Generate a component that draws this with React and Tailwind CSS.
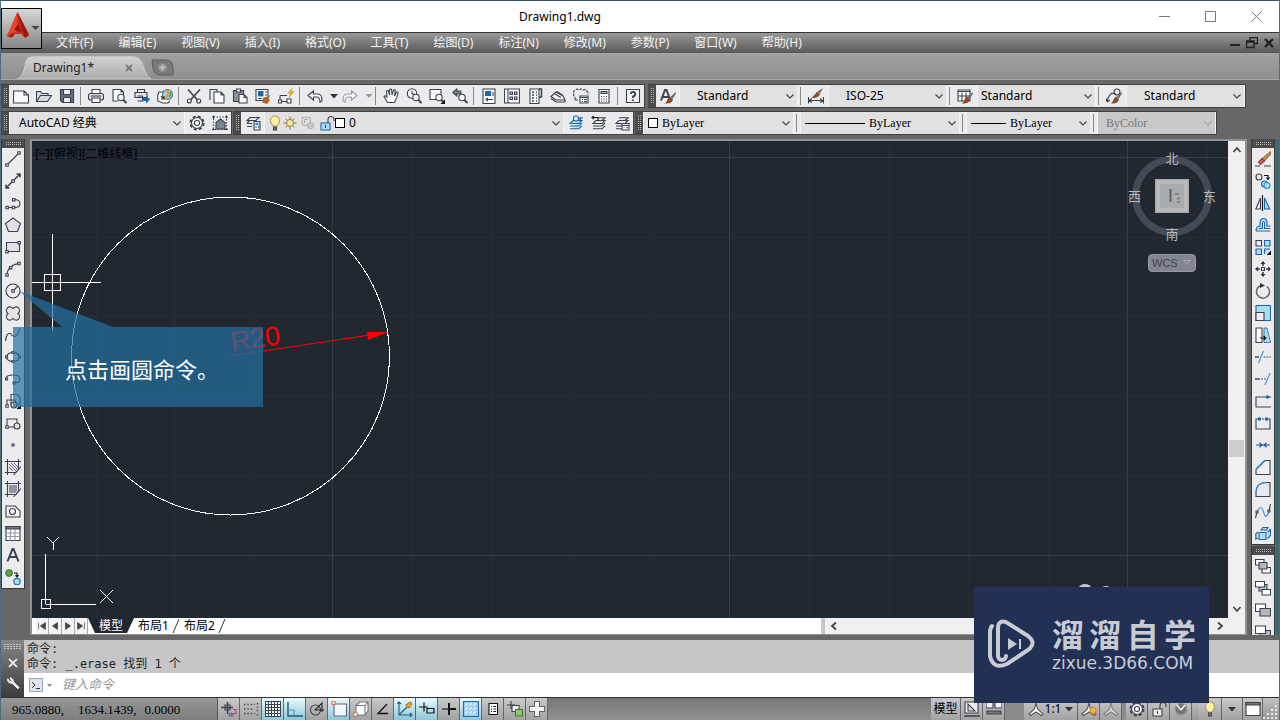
import { useState } from "react";
import clsx from "clsx";

const menus = [
  "文件(F)", "编辑(E)", "视图(V)", "插入(I)", "格式(O)", "工具(T)",
  "绘图(D)", "标注(N)", "修改(M)", "参数(P)", "窗口(W)", "帮助(H)",
];

const standardGroups = [
  ["new", "open", "save"],
  ["print", "preview", "publish", "globe"],
  ["cut", "copy", "paste", "match", "blockEdit"],
  ["undo", "drop", "redo", "dropOff"],
  ["pan", "zoomTime", "zoomWindow", "zoomPrev"],
  ["properties", "design", "palette", "sheet", "markup", "calc"],
  ["help"],
];

const drawTools = [
  "line", "xline", "pline", "polygon", "rect", "arc", "circle", "cloud", "spline", "ellipse",
  "ellipseArc", "insertBlock", "makeBlock", "point", "hatch", "gradient", "region", "table", "mtext", "addSelected",
];

const modifyTools = [
  "erase", "copyObject", "mirror", "offset", "array", "move", "rotate", "scale", "stretch",
  "trim", "extend", "breakPoint", "break", "join", "chamfer", "fillet", "blend", "explode",
];

const orderTools = ["front", "back", "above", "under"];

const statusToggles = [
  { icon: "infer" },
  { icon: "snap" },
  { icon: "grid", on: true },
  { icon: "ortho", on: true },
  { icon: "polar" },
  { icon: "osnap", on: true },
  { icon: "osnap3d" },
  { icon: "otrack" },
  { icon: "ducs", on: true },
  { icon: "dyn", on: true },
  { icon: "lineweight" },
  { icon: "transparency", on: true },
  { icon: "quick" },
  { icon: "cycle" },
  { icon: "monitor" },
];

const BLUE = "#1f66a8";
const PALE = "#a9dcf5";
const BROWN = "#8a4b22";

const brush = (
  <g stroke="none">
    <path d="M15.5 4 10.5 9 12.5 11 16 5.5z" fill="#6b7078" />
    <path d="M10 8.500 13 11.500C12.500 14 9.500 16 4.500 15.500 7.500 14.500 6.500 11 10 8.500z" fill={BROWN} />
  </g>
);

const lens = (
  <>
    <circle cx="10" cy="9.5" r="3.2" fill="#f2f4f7" />
    <path d="m12.4 12 3 3" strokeWidth="1.8" />
  </>
);

const layers = <path d="M5 5.5h9l-3 3H2zM2 11h9l3-3M2 13.8h9l3-3M5 2.8h9l-3 2.7" />;

const icons = {
  new: <path d="M.5 3h10.500l4.500 4v8H.5zM11 3v4h4.500" fill="#fafafa" />,
  open: <path d="M.5 13.5v-10h4l1.5 2h6v2M.5 13.5 4.5 7.5h11l-4 6z" fill="#d6dae0" />,
  save: (
    <>
      <path d="M1.5 1.5h13v13h-11l-2-2z" fill="#69717f" />
      <path d="M4.5 1.5h7v5h-7zM4.5 9.5h7v5h-7z" fill="#eef0f3" />
    </>
  ),
  print: (
    <>
      <path d="M4 5.5v-4h8v4" fill="#fff" />
      <rect x=".5" y="5.5" width="15" height="6.5" rx="2" fill="#d6d9de" />
      <path d="M4 10h8v4.5H4zM3 8h10" fill="#fff" />
    </>
  ),
  preview: <><path d="M7 13H2V1.5h8l2.5 2.5v3M10 1.5V4h3" fill="#fff" />{lens}</>,
  publish: (
    <>
      <path d="M3.5 4.500v-3h7v3M1 4.500h12v5H1zM3.500 8h5v5h-5" fill="#e3e5e9" />
      <path d="M8 10h4V7.500l4 4-4 4V13H8z" fill={BLUE} stroke="none" />
    </>
  ),
  globe: (
    <>
      <path d="M7 4H2L.8 7v6l5 2h5l2-2" fill="#fff" />
      <circle cx="10.5" cy="6.5" r="5" fill="#9ed0ee" stroke="#4b7895" />
      <path d="M9 2.500c3 1 3 3 2 4s-2 2-1 4" stroke="#e49b24" strokeWidth="2" />
      <path d="M13 4q1.500 3-1 5" stroke="#5aa548" strokeWidth="1.500" />
      <path d="m4 8 3 3M7 8v3H4" stroke="#333" />
    </>
  ),
  cut: (
    <>
      <path d="M2 1.5 11.5 12M14 1.5 4.5 12" strokeWidth="1.6" />
      <circle cx="3.3" cy="13" r="2" /><circle cx="12.7" cy="13" r="2" />
    </>
  ),
  copy: <><path d="M1 12V1.5h7V4" /><path d="M5 4h7l3 3v8H5zM12 4v3h3" fill="#fff" /></>,
  paste: (
    <>
      <path d="M1.5 2.5h10v11h-10z" fill="#8b9099" />
      <path d="M4.500 1h4v3h-4zM7 6.500h5l3 3V15H7zM12 6.500v3h3" fill="#fff" />
    </>
  ),
  match: (
    <>
      <path d="M1 1.500h12v11H1z" fill="#fff" />
      <path d="M3 3h5.500v5.500H3z" fill={BLUE} stroke="none" />
      <path d="M10 4h2M10 7h2M3 10.500h4" />
      <path d="m15.500 7-4 2.500 1.500 1.500z" fill="#6b7078" stroke="none" />
      <path d="m8 10 3-1.500 4 3.500-3 4-5-1.500c1.500-.5 0-2.500 1-4.500z" fill="#b5651d" stroke="none" />
    </>
  ),
  blockEdit: (
    <>
      <path d="M2 7.500h7M2 7.500v6h9" />
      <path d="M.5 12h3v3h-3zM9 11h4v4H9z" fill="#fff" />
      <path d="m14 .5-4 5h3l-2 4 5-6h-3z" fill="#f4a51f" stroke="#d78a10" strokeWidth=".5" />
    </>
  ),
  undo: <path d="M1 7.500 6.500 3v3H11q4 0 4 7l-2 1q0-4.500-3-5H6.500v3z" fill="#fafafa" />,
  redo: <path d="M15 7.500 9.500 3v3H5Q1 6 1 13l2 1q0-4.500 3-5h3.500v3z" fill="#fafafa" stroke="#989da5" />,
  drop: <path d="M4 6h8l-4 4.500z" fill="#333" stroke="none" />,
  dropOff: <path d="M4.500 6h7L8 10z" fill="#999" stroke="none" />,
  pan: <path d="M4.500 14.500 1 8.500q1-1.500 3 .5L3.500 3q1.500-1 2 0L6.500 7V1.500q1.500-1 2 0L9 7l1.500-5q1.500-.5 1.700.5L11.500 8l2-4q1.800-.3 1.500 1-1.500 6-3.500 9.500z" fill="#fff" />,
  zoomTime: <><circle cx="6" cy="5.500" r="4.700" fill="#fff" /><path d="M6 2.500v3.500h3" />{lens}</>,
  zoomWindow: <><path d="M7 11.500H1v-10h11v5" fill="#fff" />{lens}<path d="M16 11.500V16h-4.500z" fill="#111" stroke="none" /></>,
  zoomPrev: <><path d="m.8 4.500 4-3.500v2h4v3h-4v2z" fill="#7a828f" />{lens}</>,
  properties: <><path d="M2 1h12v14.500H2z" fill="#fff" /><path d="M4 3h6v5H4z" fill={BLUE} stroke="none" /><path d="M12 4v4M5 11.500h7M7 10l-2 1.500L7 13" /></>,
  design: <><path d="M.5 1h15v14H.5z" fill="#fff" /><path d="M4 1v14M6 4h2.500v2.500H6zM10.500 4H13v2.500h-2.500zM6 9h2.500v2.500H6zM10.500 9H13v2.500h-2.500z" fill="#b4cbe0" /></>,
  palette: <><path d="M3 1h9v14.500H3z" fill="#fff" /><path d="M12 1h2.500v8H12M5 4h2M5 7h2M5 10h2M9 4h1M9 7h1M9 10h1M5 13h2M9 13h1" strokeWidth="1.500" /></>,
  sheet: <path d="M1 8.500 6 4l7 4 2 4H6zM1 10.500 6 14h9v-2M1 8.500l5 3.500M5 6l6 3.500M7 3.500 13 7.500" fill="#f5f5f5" />,
  markup: <><path d="M2 12V9Q-.5 7 1.500 5.500-.5 3 2 2.500 4 0 6 2q2-2 4 0 3-1.500 4 1.500 2 1 1 3M2 12h3" strokeDasharray="3 1" /><path d="M7 8h8v7H7z" fill="#fff" /><path d="M7 9.500h8M9 11.500h1M11 11.500h3M9 13.500h1M11 13.500h3" /></>,
  calc: <><path d="M3 1.500h10V15H3z" fill="#fff" /><path d="M5 3.500h6v2H5z" fill="#b0b5bd" /><path d="M5 8.500h1M7.500 8.500h1M10 8.500h1M5 11h1M7.500 11h1M10 11h1M5 13h1M7.500 13h1M10 13h1" /></>,
  help: <><path d="M1.500 1.500h13v13h-13z" fill="#f4f4f4" /><path d="M5.800 6q0-2 2.200-2t2.200 2T8 8.500V10M8 11.500v1.500" strokeWidth="1.800" /></>,
  textStyle: <><path d="M1 12.500 5 2h1.500l4 10.500M3 9h6" strokeWidth="2" />{brush}</>,
  dimStyle: <><path d="M.5 9v6.500M15.500 9v6.500M1 12.500h14M4 10.500l-3 2 3 2M12 10.500l3 2-3 2" /><path d="m15 0-5.500 3.500 2.500 2.500z" fill="#6b7078" stroke="none" /><path d="m9 3.500 3 3Q9 11 3.500 9.500 6.500 8 9 3.500z" fill={BROWN} stroke="none" /></>,
  tableStyle: <><path d="M1 2h12v11H1z" fill="#fff" /><path d="M1 3.500h12M1 8h12M5 4.500V13M9 4.500V13" />{brush}</>,
  leaderStyle: <><path d="M1 14Q2 8 6 5l4 1M1 14l-.5-3.500M1 14l3-2" /><circle cx="11" cy="4" r="3" />{brush}</>,
  gear: <><circle cx="8" cy="8" r="6.500" strokeWidth="2" strokeDasharray="3 2.100" /><circle cx="8" cy="8" r="5.500" fill="#eee" /><circle cx="8" cy="8" r="2.500" fill="#fff" /></>,
  workspace: <><path d="M1.500 2h13v12.500h-13z" strokeDasharray="1.500 1.500" /><path d="M4 7.500 8.500 4 13 7.500V14H4z" fill="#788597" /><path d="M0 2h3M1.500.5v3M13 2h3M14.500.5v3M0 14.500h3M13 14.500h3" /></>,
  layerProps: <><path d="M5 2.500h9l-3 3H2zM2 8.500h5M2 11.500h5M2 8l3-2.500" /><path d="M9 6.500h6V15H9z" fill="#dce9f5" /><path d="M10.500 9h3M10.500 12h1M13 12h1" stroke={BLUE} strokeWidth="1.500" /></>,
  layerCurrent: <><g stroke={BLUE} fill={PALE}>{layers}</g><circle cx="8" cy="3.500" r="2.500" fill="#fff" stroke={BLUE} /></>,
  layerPrev: <>{layers}<path d="M7 6V2.500H1M3 .8l-2 1.700 2 1.700" stroke="#111" /></>,
  layerState: <>{layers}<path d="M8 8.500h7v6.500H8z" fill="#fff" /><path d="M8 10.500h7M9.500 12.700h1M12 12.700h2" /></>,
  bulb: <><path d="M6 11Q3.500 8 3.500 5.500a4.500 4.500 0 0 1 9 0Q12.500 8 10 11z" fill="#fff1a8" stroke="#b79a55" /><path d="M6.500 12h3v3h-3z" fill="#737b84" /></>,
  sun: <><path d="M8 .5v15M.5 8h15M3 3l10 10M13 3 3 13" stroke="#8b7440" /><circle cx="8" cy="8" r="4" fill="#fbe99c" stroke="#8b7440" /></>,
  vpFreeze: <g stroke="#aaa"><path d="M1.500 1.500h9v9h-9z" /><path d="M4 4h4M4 4v4" /><circle cx="11" cy="11" r="3.500" fill="#ccc" /></g>,
  unlock: <><path d="M2 8h9v7H2z" fill={PALE} stroke={BLUE} /><path d="M9 8V4.500a3 3 0 0 1 6 0V6M6.500 10v3" /></>,
  unlockGray: <><path d="M2 8h9v7H2z" fill="#eee" stroke="#444" /><path d="M9 8V4.500a3 3 0 0 1 6 0V6M6.500 10v3" /></>,

  line: <><path d="m2 14 12-12" /><path d="M.8 12.800h2.400v2.400H.8zM12.800.8h2.400v2.400h-2.400z" fill="#eee" /></>,
  xline: <><path d="m1 15 14-14M1 11.500V15h3.500M11.500 1H15v3.500" strokeWidth="1.500" /><path d="M6.800 6.800h2.400v2.400H6.800z" fill="#eee" /></>,
  pline: <><path d="M2 12.500h8q5 0 5-4t-6-4" /><path d="M1 11.300h2.400v2.400H1zM7.300 11.300h2.400v2.400H7.300zM7.500 3.500h2.400v2.400H7.500z" fill="#eee" /></>,
  polygon: <path d="M8 1 15.500 6.500 12.500 14.500h-9L.5 6.500z" fill="#e0e1e4" />,
  rect: <><path d="M1.500 3.500h13v9h-13z" fill="#e0e1e4" /><path d="M.8 11.500h2.400v2.400H.8zM13 2.500h2.400v2.400H13z" fill="#fff" /></>,
  arc: <><path d="M2 14Q2.500 4 14 2.500" /><path d="M.8 12.800h2.400v2.400H.8zM12.800 1.300h2.400v2.400h-2.400zM4.500 5.500h2.400v2.400H4.500z" fill="#eee" /></>,
  circle: <><circle cx="8" cy="8" r="7" /><path d="m8 8 4.500-4.500" /><path d="M6.800 6.800h2.400v2.400H6.800z" fill="#eee" /></>,
  cloud: <path d="M8 3.500a3.600 3.600 0 1 1 5 5 3.600 3.600 0 1 1-5 5 3.600 3.600 0 1 1-5-5 3.600 3.600 0 1 1 5-5z" fill="#e5e5e7" />,
  spline: <path d="M.5 14Q1.500 5 5.500 6.500q5 8 9.500-5" />,
  ellipse: <><ellipse cx="8" cy="8" rx="6.500" ry="4.500" /><path d="M.5 7h2v2h-2zM13.500 7h2v2h-2zM7 2.500h2v2H7zM7 11.500h2v2H7z" fill="#eee" /></>,
  ellipseArc: <><path d="M1 8q0-4 7-4t7 4q0 4-5 4" /><path d="M.5 7h2v2h-2zM8 11h2v2H8z" fill="#eee" /></>,
  insertBlock: <><path d="M6 1.500h6l3 3V11H6z" fill="#eef3f8" /><path d="M2 13V7h8v5" /><circle cx="9" cy="12" r="3" fill="#ddd" /><path d="M.8 11.800h2.400v2.400H.8z" fill="#fff" /><path d="M16 11.500V16h-4.500z" fill="#111" stroke="none" /></>,
  makeBlock: <><path d="M2 12V4h10v4M2 12h7" /><circle cx="12" cy="11" r="3" fill="#e4e4e4" /><path d="M.8 10.800h2.400v2.400H.8z" fill="#fff" /></>,
  point: <path d="M7 7h2v2H7z" fill="#fff" />,
  hatch: <><path d="M2.500 0v16M13.500 0v10l-5 6M0 2.500h16M0 13.500h11l5-6" /><path d="m4 5 7 7M6 4l6 6M9 4l4 4M4 8l4 4" strokeWidth=".8" /></>,
  gradient: <><path d="M4 4h8v6l-2 2H4z" fill="#8d95a1" stroke="none" /><path d="M2.500 0v16M13.500 0v10l-5 6M0 2.500h16M0 13.500h11l5-6" /></>,
  region: <><path d="M1 3h9l5 5v6H1z" fill="#f5f5f5" /><circle cx="7.500" cy="8.500" r="3" /></>,
  table: <><path d="M1 1.500h14v14H1z" fill="#fff" /><path d="M1 1.500h14v2.500H1z" fill="#707987" /><path d="M1 8h14M1 11.500h14M5.500 4.500v11M10 4.500v11" stroke="#959ba5" /></>,
  mtext: <path d="M2.500 14.500 7.500 2h1l5 12.500M4.500 10h7" strokeWidth="2" />,
  addSelected: <><circle cx="4" cy="4" r="3.200" fill="#59a93d" stroke="#37742a" /><circle cx="12" cy="12.500" r="3.200" fill="#9ed8ff" stroke={BLUE} /><path d="M9 4h3v3M10.500 6l1.500 2 1.500-2" stroke="#111" /></>,

  erase: <><path d="M0 15h5M9 15h7" /><path d="m15.500.5-8.500 7 2.500 2.500 6.500-7z" fill="#c58b37" stroke="#7a4b1c" strokeWidth=".7" /><path d="M7 7.500 3.500 11l2 2.500 4-3.500z" fill="#d26960" stroke="#8b3c34" /></>,
  copyObject: <><circle cx="4" cy="4" r="3" /><circle cx="9.500" cy="11" r="3" fill={PALE} stroke={BLUE} /><circle cx="12" cy="12.500" r="3" fill={PALE} stroke="#3b91dc" /><path d="M9 2.500h4v3M11.500 4.500 13 6.500l1.500-2" stroke="#111" /></>,
  mirror: <><path d="M7.500 0v16" stroke="#111" /><path d="M5.500 3v11H.8z" fill="#eee" /><path d="M9.500 3v11h5.200z" fill={PALE} stroke={BLUE} /></>,
  offset: <g stroke={BLUE}><path d="M1 14h14.500M1 14Q1 9 5 9V6Q5 1.500 8.500 1.500T12 6v3h3.500" fill={PALE} /><path d="M4 11.500h3.500V6.500q0-2 1-2t1 2v5h6" fill="#f4f8fb" /></g>,
  array: <><path d="M1 1.500h5.500V7H1z" fill="#eee" /><g fill={PALE} stroke={BLUE}><path d="M9.500 1.500H15V7H9.500zM1 10h5.500v5.500H1zM9.500 15v-5H15" /></g><path d="M16 11.500V16h-4.500z" fill="#111" stroke="none" /></>,
  move: <><path d="M8 1v4M8 11v4M1 8h4M11 8h4" strokeWidth="1.600" /><path d="m5.500 3 2.500-3 2.500 3zM5.500 13 8 16l2.500-3zM3 5.500 0 8l3 2.500zM13 5.500 16 8l-3 2.500z" fill="#333" stroke="none" /><path d="M6.500 6.500h3v3h-3z" /></>,
  rotate: <><path d="M6 2.500a6.500 6.500 0 1 0 6 1" strokeWidth="1.500" stroke="#666" /><path d="M5 0v5l5-2.500z" fill="#333" stroke="none" /></>,
  scale: <><path d="M1 .5h14.500v15H1z" fill={PALE} stroke={BLUE} /><path d="M1 7.500h8v8H1z" fill="#eee" /></>,
  stretch: <><path d="M1 1h6v14.500H1z" fill="#fff" /><path d="M9 1h3l3.500 14.500H9z" fill={PALE} stroke={BLUE} strokeWidth=".8" /><path d="M5 11h5M8.500 9l2.500 2-2.500 2" stroke="#111" /></>,
  trim: <><path d="M0 8h4" stroke="#111" /><path d="M8.500 8H16" stroke={BLUE} strokeDasharray="2 1" /><path d="m3.500 14 5-12" stroke="#3b91dc" /></>,
  extend: <><path d="M0 8h5" stroke="#111" /><path d="M6 8h5" stroke={BLUE} strokeDasharray="2 1" /><path d="m10 14 5-12" stroke="#3b91dc" /></>,
  breakPoint: <><path d="M11 4H1v10h15M14 4h2" /><circle cx="12.500" cy="4" r="1.800" fill={BLUE} stroke="none" /></>,
  break: <><path d="M3 4H1v10h14V4h-2M7 4h2" /><circle cx="4.500" cy="4" r="1.800" fill={BLUE} stroke="none" /><circle cx="11.500" cy="4" r="1.800" fill={BLUE} stroke="none" /></>,
  join: <><path d="M1 8h14" stroke={BLUE} /><path d="M4.500 5 8 8l-3.500 3zM11.500 5 8 8l3.500 3z" fill={BLUE} stroke="none" /></>,
  chamfer: <><path d="M10 1.500h5v14H1v-5z" fill="#f1f1f2" /><path d="M1 10 9.500 1.500" stroke="#3b91dc" /></>,
  fillet: <><path d="M11 1.500h4v14H1v-4Q1 2 11 1.500z" fill="#e7e9ee" /><path d="M1 11Q1 2 11 1.500" stroke="#3b91dc" /></>,
  blend: <><path d="M.5 15 2 9M14 8l1.500-7" /><path d="M2 9q4-9 6.500 0T14 8" stroke="#3b91dc" /><path d="M1 8h2v2H1zM13 7h2v2h-2z" fill="#fff" /></>,
  explode: <g fill={PALE} stroke={BLUE}><path d="M4 7.500h7v7H4zM6 5l2-2.500h5L11.500 5zM12.500 7l3-2.500v6l-3 3M3 7 .8 9v5l2-1" /></g>,

  front: <><path d="M.5 1.500H9V7H.5zM7 9.500h8.500V15H7z" fill="#fff" /><path d="M4 4.500h8v6.500H4z" fill="#b4b8be" /></>,
  back: <><path d="M4 4.500h8v6.500H4z" fill="#b4b8be" /><path d="M.5 1.500h9V7h-9zM7 9.500h8.500V15H7z" fill="#fff" /></>,
  above: <><path d="M.5 2h10v7.500H.5z" fill="#fff" /><path d="M5 6.500h10.500V14H5z" fill="#b4b8be" /></>,
  under: <><path d="M5 6.500h10.500V14H5z" fill="#b4b8be" /><path d="M.5 2h10v7.500H.5z" fill="#fff" /></>,

  infer: <><path d="M0 6.500h12M6.500 1v12" strokeWidth="1.400" /><path d="M4 4h5v5H4z" /><path d="M12 8.500h3v4h-3v3" stroke="#cf3f55" /><circle cx="9.500" cy="13.500" r="1.500" stroke={BLUE} /></>,
  snap: <path d="M1 3.500h11M1 8h9M1 12.500h11M14.500 2v9M14.500 13v1.500" strokeWidth="1.400" strokeDasharray="1.400 2" />,
  grid: <><path d="M.5.500h15v15H.5z" fill="#fff" /><path d="M3.500 1v14M6.500 1v14M9.500 1v14M12.500 1v14M1 3.500h14M1 6.500h14M1 9.500h14M1 12.500h14" /></>,
  ortho: <><path d="M1 1v14h15" stroke="#205b73" strokeWidth="1.400" /><path d="M1 9h6v6" stroke="#4a9abd" /></>,
  polar: <><circle cx="6.500" cy="9" r="5" /><path d="M15 9H6l7-7v9" stroke="#222" /></>,
  osnap: <><path d="M3 3h12.500v12H3z" fill="#f3f5f8" stroke="#5c687b" /><circle cx="2.500" cy="2" r="1.800" fill="#fff" stroke="#df6544" /></>,
  osnap3d: <><path d="M3 4.500 7 1h8v9l-3 4H3zM3 4.500h9V14M12 4.500 15 1" fill="#fff" stroke="#737a84" /><circle cx="2.500" cy="13.500" r="2" fill="#fff" stroke="#df6544" /></>,
  otrack: <path d="M12 3 3 12.500h10" stroke="#111" strokeWidth="1.300" />,
  ducs: <><path d="M2 1v13h13M0 3l2-2 2 2M13 12l2 2-2 2M2 14 12 4" stroke="#1f5b78" /><path d="m9 4 4-3 2 2-3 4z" fill="#f1b12c" stroke="#b67b19" /></>,
  dyn: <path d="M0 6h9M5 1.500v9M8 7.500h7V12H8z" stroke="#111" strokeWidth="1.200" />,
  lineweight: <><path d="M1 8h8" stroke="#111" /><path d="M8 8h7M8 2v12" stroke="#111" strokeWidth="2" /></>,
  transparency: <><path d="M.5.500h15v15H.5z" fill="#9fd0f2" stroke="#2367a5" /><path d="M4 2v12M8 2v12M12 2v12M2 4h12M2 8h12M2 12h12" stroke="#cfe9fb" strokeWidth="2" strokeDasharray="2 2" /></>,
  quick: <><path d="M4 2.500h8.500v11H4z" fill="#fff" stroke="#111" /><path d="M6 5.500h1M8.500 5.500H11M6 8h1M8.500 8H11M6 10.500h1M8.500 10.500H11" stroke="#111" /></>,
  cycle: <><path d="M0 4h8M4 0v8" /><path d="M5 4.500h7v6H5z" fill="#f4f4f4" /><path d="M8.500 8.500h7V15h-7z" fill="#8bc875" stroke="#3d7a2c" /></>,
  monitor: <path d="M5.500.5h5v5H15.500v5h-5v5h-5v-5h-5v-5h5z" fill="#f5f5f5" stroke="#666" />,
  modelSpace: <><path d="M1 1h13v11H1z" fill="#eee" /><path d="M4 3v7h7z" fill="#ddd" /><path d="M0 15h16" strokeWidth="1.600" /></>,
  quickView: <><path d="M0 1h7v6H0zM9 1h7v6H9z" fill="#f1f1f1" /><path d="M1 10h14v3H1z" fill="#777" /></>,
  person: <path d="m8 2 1.500 6 5.500 5-1.500 1.500L8 11l-5.500 3.500L1 13l5.500-5z" fill="#fff" stroke="#555" />,
  personSun: <><path d="m8 2 1.500 6 5.500 5-1.500 1.500L8 11l-5.500 3.500L1 13l5.500-5z" fill="#fff" stroke="#555" /><circle cx="12" cy="9.500" r="3" fill="#f6b93b" stroke="#d28b1b" /></>,
  personOff: <path d="m8 2 1.500 6 5.500 5-1.500 1.500L8 11l-5.500 3.500L1 13l5.500-5z" fill="#d6d6d6" stroke="#808080" />,
  isolate: <><circle cx="8" cy="8" r="6" fill="#777" stroke="#999" /><path d="m8 9 4-5M3.500 3.500 8 9" stroke="#eee" strokeWidth="1.500" /></>,
  cleanScreen: <><path d="M1 1.500h14v13H1z" fill="#fff" /><path d="M1 1.500h14V4H1z" fill="#777" /></>,
  wrench: <path d="M2 2a4 4 0 0 0 5 5l6.500 6.500 1.500-1.500L8.500 5.500A4 4 0 0 0 4.500 1l1.500 3-1.500 1.500z" fill="#eee" stroke="#eee" />,
  close: <path d="m3.500 3.500 9 9M12.500 3.500l-9 9" stroke="#eee" strokeWidth="2.200" />,
};

function Icon({ name, className = "size-4" }) {
  return (
    <svg viewBox="0 0 16 16" fill="none" stroke="#3b424d" strokeWidth="1.1" className={clsx("shrink-0", className)} aria-hidden="true">
      {icons[name]}
    </svg>
  );
}

function Tool({ name, className = "h-[22px] w-[23px]" }) {
  return (
    <button type="button" aria-label={name} className={clsx("grid shrink-0 place-items-center hover:bg-sky-100", className)}>
      <Icon name={name} />
    </button>
  );
}

function Separator() {
  return <span className="mx-[2px] my-[2px] w-[2px] shrink-0 border-l border-[#888]" />;
}

function Grip() {
  return (
    <span className="flex w-2 shrink-0 items-center justify-center gap-px bg-[#4c4c4c]">
      <span className="h-4 w-px bg-[repeating-linear-gradient(#b4b4b4_0_1px,#4c4c4c_1px_2px)]" />
      <span className="h-4 w-px bg-[repeating-linear-gradient(#b4b4b4_0_1px,#4c4c4c_1px_2px)]" />
    </span>
  );
}

function Panel({ children }) {
  return (
    <div className="flex h-6 border-y border-r border-[#404040] bg-[#ebebed]">
      <Grip />
      {children}
    </div>
  );
}

function Combo({ label, value, className, selectClassName, children, disabled }) {
  return (
    <div className={clsx("relative flex shrink-0 items-center border-x border-[#f4f4f4]", disabled ? "bg-[#c9c9c9]" : "bg-[#e1e1e1]", className)}>
      {children}
      <select
        aria-label={label}
        disabled={disabled}
        defaultValue={value}
        className={clsx("h-full min-w-0 flex-1 appearance-none bg-transparent pr-5 outline-none", disabled ? "text-[#777]" : "text-black", selectClassName)}
      >
        <option>{value}</option>
      </select>
      <svg viewBox="0 0 8 8" className={clsx("pointer-events-none absolute right-[3px] size-2 fill-none", disabled ? "stroke-[#aaa]" : "stroke-[#444]")} aria-hidden="true">
        <path d="m.5 2.500 3.500 3.500 3.500-3.500" strokeWidth="1.200" />
      </svg>
    </div>
  );
}

function TitleBar() {
  return (
    <header className="relative flex h-8 shrink-0 items-center justify-center border-t border-[#37545e] bg-white pr-40">
      <h1 className="text-xs text-black">Drawing1.dwg</h1>
      <div className="absolute right-0 flex">
        <button type="button" aria-label="Minimize" className="grid h-7 w-[46px] place-items-center">
          <svg viewBox="0 0 11 11" className="size-[11px] stroke-[#777]"><path d="M0 5.500h11" /></svg>
        </button>
        <button type="button" aria-label="Maximize" className="grid h-7 w-[46px] place-items-center">
          <svg viewBox="0 0 11 11" className="size-[11px] fill-none stroke-[#777]"><path d="M.5.500h10v10H.5z" /></svg>
        </button>
        <button type="button" aria-label="Close" className="grid h-7 w-[46px] place-items-center">
          <svg viewBox="0 0 11 11" className="size-[11px] stroke-[#777]"><path d="m.5.500 10 10M10.500.500l-10 10" /></svg>
        </button>
      </div>
      <button type="button" aria-label="Application menu" className="absolute top-[7px] left-0 z-10 flex h-[41px] w-[41px] items-center border border-black bg-gradient-to-b from-[#d8d8d8] to-[#868686]">
        <svg viewBox="0 0 39 39" className="size-[39px]" aria-hidden="true">
          <path d="M15.500 3 27 26l-4 3-4-4h-6l-3 3.500-5-1.500z" fill="#c92b1c" />
          <path d="M15.500 3 5 27l5 1.500 5-8z" fill="#e8452f" />
          <path d="m15.500 3 3.500 14 4 12 4-3z" fill="#9c1710" />
          <path d="m12 21 4-6 4 8z" fill="#8d170e" />
          <path d="M5 27l5 1.500 2-3 1-2z" fill="#a81a10" />
          <path d="M29.500 17h8l-4 4z" fill="#444" />
        </svg>
      </button>
    </header>
  );
}

function MenuBar() {
  return (
    <nav className="flex h-[21px] shrink-0 items-center border-t border-[#333] bg-gradient-to-b from-[#999] to-[#595959] pr-1 pl-[55px] text-xs text-[#f2f2f2]">
      <div className="flex gap-[25px]">
        {menus.map((menu) => (
          <button type="button" className="whitespace-nowrap" key={menu}>{menu}</button>
        ))}
      </div>
      <div className="ml-auto flex gap-[5px]">
        <button type="button" aria-label="Minimize drawing">
          <svg viewBox="0 0 12 12" className="size-3 stroke-[#222]"><path d="M1 8h10" strokeWidth="2" /></svg>
        </button>
        <button type="button" aria-label="Restore drawing">
          <svg viewBox="0 0 12 12" className="size-3 fill-none stroke-[#222]"><path d="M4 3.500v-3h7.500v6H8M.5 4h7.500v6.500H.5zM.5 5H8" strokeWidth="1.400" /></svg>
        </button>
        <button type="button" aria-label="Close drawing">
          <svg viewBox="0 0 12 12" className="size-3 stroke-[#222]"><path d="m2 2 8 8M10 2l-8 8" strokeWidth="2.400" /></svg>
        </button>
      </div>
    </nav>
  );
}

function FileTabs() {
  return (
    <div className="flex h-[27px] shrink-0 items-end border-b border-[#aaa] bg-gradient-to-b from-[#a2a2a2] to-[#8e8e8e] pl-4">
      <div className="relative flex h-[23px] w-[134px] items-center pr-[18px] pl-4">
        <svg viewBox="0 0 136 23" className="absolute inset-0 size-full" aria-hidden="true">
          <defs>
            <linearGradient id="tab" x2="0" y2="1">
              <stop stopColor="#d2d2d2" />
              <stop offset="1" stopColor="#acacac" />
            </linearGradient>
          </defs>
          <path d="M0 23Q5 22 7 14L9 6Q10 .5 16 .5H118Q124 .5 127 7L130 15Q132 22 136 23z" fill="url(#tab)" stroke="#ccc" />
        </svg>
        <span className="relative text-xs text-[#222]">Drawing1*</span>
        <button type="button" aria-label="Close tab" className="relative ml-auto">
          <svg viewBox="0 0 8 8" className="size-2 stroke-[#777]"><path d="m1 1 6 6M7 1 1 7" strokeWidth="1.800" /></svg>
        </button>
      </div>
      <button type="button" aria-label="New tab" className="mb-[3px]">
        <svg viewBox="0 0 23 17" className="h-[17px] w-[23px]">
          <path d="M1 1h15q6 0 6 9v6H9Q3 16 2 9z" fill="#7a7a7a" stroke="#5c5c5c" />
          <circle cx="11.500" cy="8.500" r="4.500" fill="#8c8c8c" />
          <path d="M11.500 5.500v6M8.500 8.500h6" stroke="#bdbdbd" strokeWidth="2" />
        </svg>
      </button>
    </div>
  );
}

function StandardToolbar() {
  return (
    <div className="flex gap-[3px]">
      <Panel>
        <div className="flex">
          {standardGroups.map((group, index) => (
            <div className="flex" key={group[0]}>
              {index ? <Separator /> : null}
              {group.map((name) => (
                <Tool name={name} key={name} className={name.startsWith("drop") ? "h-[22px] w-3" : undefined} />
              ))}
            </div>
          ))}
        </div>
      </Panel>
      <Panel>
        <Tool name="textStyle" />
        <Combo label="Text style" value="Standard" className="w-[119px]" selectClassName="pl-[17px] text-xs" />
        <Separator />
        <Tool name="dimStyle" className="h-[22px] w-6" />
        <Combo label="Dimension style" value="ISO-25" className="w-[119px]" selectClassName="pl-[17px] text-xs" />
        <Separator />
        <Tool name="tableStyle" className="h-[22px] w-6" />
        <Combo label="Table style" value="Standard" className="w-[119px]" selectClassName="pl-[3px] text-xs" />
        <Separator />
        <Tool name="leaderStyle" className="h-[22px] w-6" />
        <Combo label="Leader style" value="Standard" className="w-[119px]" selectClassName="pl-[17px] text-xs" />
      </Panel>
    </div>
  );
}

function PropertiesToolbar() {
  return (
    <div className="flex gap-px">
      <Panel>
        <Combo label="Workspace" value="AutoCAD 经典" className="w-[176px]" selectClassName="pl-[9px] text-xs" />
        <Tool name="gear" />
        <Tool name="workspace" />
      </Panel>
      <Panel>
        <Tool name="layerProps" />
        <Combo label="Layer" value="0" className="w-[300px] pl-[2px]" selectClassName="pl-1 text-xs">
          <Icon name="bulb" />
          <Icon name="sun" className="size-[14px]" />
          <Icon name="vpFreeze" className="ml-1 size-[14px]" />
          <Icon name="unlock" className="ml-1 size-4" />
          <span className="size-[10px] border border-black bg-white" />
        </Combo>
        <Tool name="layerCurrent" />
        <Tool name="layerPrev" />
        <Tool name="layerState" />
      </Panel>
      <Panel>
        <Combo label="Color" value="ByLayer" className="w-[151px] pl-1" selectClassName="pl-1 font-['Liberation_Serif'] text-xs">
          <span className="size-[10px] border border-black bg-white" />
        </Combo>
        <Separator />
        <Combo label="Linetype" value="ByLayer" className="w-[160px] pl-1" selectClassName="pl-1 font-['Liberation_Serif'] text-xs">
          <span className="h-px w-[60px] bg-black" />
        </Combo>
        <Separator />
        <Combo label="Lineweight" value="ByLayer" className="w-[125px] pl-1" selectClassName="pl-1 font-['Liberation_Serif'] text-xs">
          <span className="h-px w-[35px] bg-black" />
        </Combo>
        <Separator />
        <Combo label="Plot style" value="ByColor" disabled className="w-[119px]" selectClassName="pl-2 font-['Liberation_Serif'] text-xs" />
      </Panel>
    </div>
  );
}

function SideGrip() {
  return (
    <div className="flex h-[9px] shrink-0 flex-col items-center justify-center gap-px bg-[#4c4c4c]">
      <span className="h-px w-[15px] bg-[repeating-linear-gradient(90deg,#b4b4b4_0_1px,#4c4c4c_1px_2px)]" />
      <span className="h-px w-[15px] bg-[repeating-linear-gradient(90deg,#b4b4b4_0_1px,#4c4c4c_1px_2px)]" />
    </div>
  );
}

function SideBar({ tools, className }) {
  return (
    <div className={clsx("flex w-6 flex-col border border-t-0 border-[#3a3a3a] bg-[#ececee]", className)}>
      <SideGrip />
      {tools.map((name) => <Tool name={name} key={name} className="h-[22px] w-[22px]" />)}
    </div>
  );
}

const minorX = [64, 142, 221, 379, 459, 538, 618, 777, 857, 936, 1016, 1175];
const majorX = [300, 697, 1095];
const minorY = [96, 175, 255, 334];
const majorY = [16, 414];

function Drawing() {
  return (
    <svg className="absolute inset-0 size-full" fill="none" aria-label="Model space">
      <g shapeRendering="crispEdges">
        {minorX.map((x) => <line x1={x} x2={x} y1="0" y2="100%" stroke="#262e38" key={x} />)}
        {minorY.map((y) => <line x1="0" x2="100%" y1={y} y2={y} stroke="#262e38" key={y} />)}
        {majorX.map((x) => <line x1={x} x2={x} y1="0" y2="100%" stroke="#353e49" key={x} />)}
        {majorY.map((y) => <line x1="0" x2="100%" y1={y} y2={y} stroke="#353e49" key={y} />)}
      </g>
      <circle cx="198.500" cy="215" r="159" stroke="#fff" shapeRendering="crispEdges" />
      <path d="m198 215 140-21" stroke="#f00" />
      <path d="m335 191 22 0-21 8z" fill="#f00" />
      <text x="200" y="210" transform="rotate(-8 200 210)" fill="#f00" className="font-['Liberation_Sans'] text-[27px]">R20</text>

      <g stroke="#fff" shapeRendering="crispEdges">
        <path d="M0 141.500h69M20.500 93v97M12.500 133.500h16v16h-16z" />
        <path d="M13.500 413v45M18 463.500h46M9.500 458.500h9v9h-9zM13.500 463.500h5M13.500 458v5" />
        <path d="m15 396 6 6 6-6M21.500 402v7M68 449l13 13M81 449l-13 13" shapeRendering="auto" />
      </g>
      <g fill="#c3c8d0">
        <ellipse cx="1053" cy="447" rx="6" ry="4" />
        <ellipse cx="1074" cy="448" rx="5" ry="3" />
      </g>
    </svg>
  );
}

function ViewCube() {
  return (
    <div className="absolute top-[9px] right-[10px] flex w-[92px] flex-col items-center text-[#b7babf]">
      <div className="relative grid size-[92px] place-items-center">
        <span className="absolute size-20 rounded-full border-[7px] border-[#454b56]" />
        <span className="absolute top-0 text-[13px] leading-4">北</span>
        <span className="absolute bottom-0 text-[13px] leading-4">南</span>
        <span className="absolute left-[2px] text-[13px] leading-4">西</span>
        <span className="absolute right-[2px] text-[13px] leading-4">东</span>
        <span className="grid size-[34px] place-items-center border border-[#a4a6a9] bg-[#b9babc]">
          <svg viewBox="0 0 24 24" className="size-6 bg-[#a7abb0]" fill="none" stroke="#5d6268">
            <path d="M10.500 5v13" strokeWidth="2" />
            <path d="M15 10h4M17 15l3-1M17 18h3" />
          </svg>
        </span>
      </div>
      <button type="button" className="mt-3 flex h-[18px] w-12 items-center rounded border border-[#9599a4] bg-[#828692] pl-[3px] font-['Liberation_Sans'] text-[11px] text-[#40444c]">
        WCS
        <svg viewBox="0 0 8 6" className="ml-[5px] h-[6px] w-2 fill-none stroke-[#a9adb6]"><path d="M.5.500h7L4 4.500z" /></svg>
      </button>
    </div>
  );
}

function Chevron({ d }) {
  return (
    <svg viewBox="0 0 10 10" className="size-[10px] fill-none stroke-[#444]" aria-hidden="true">
      <path d={d} strokeWidth="1.800" />
    </svg>
  );
}

function LayoutTabs() {
  return (
    <div className="flex h-4 shrink-0 bg-white text-xs leading-4 text-black">
      <div className="flex pl-1">
        {["M3 3v8M11 3v8L5 7z", "M10 3v8L4 7z", "M4 3v8l6-4z", "M3 3v8l6-4zM11 3v8"].map((d) => (
          <button type="button" aria-label="Scroll tabs" className="w-[13px] border-r border-[#aaa] bg-[#f4f4f4]" key={d}>
            <svg viewBox="0 0 14 14" className="size-3 fill-[#444] stroke-[#444]"><path d={d} strokeWidth=".8" /></svg>
          </button>
        ))}
      </div>
      <button type="button" className="relative w-[46px] text-white">
        <svg viewBox="0 0 46 16" className="absolute inset-0 size-full"><path d="M0 0h46l-7 15H7z" fill="#20272f" /></svg>
        <span className="relative">模型</span>
      </button>
      {["布局1", "布局2"].map((name) => (
        <button type="button" className="flex w-[46px] justify-between pl-[4px]" key={name}>
          {name}
          <svg viewBox="0 0 8 16" className="h-4 w-2 stroke-[#333]"><path d="M1 15 7 1" /></svg>
        </button>
      ))}
      <div className="ml-auto flex w-[408px] items-center border-l-4 border-[#c6c6c6] bg-[#f0f0f0]">
        <button type="button" aria-label="Scroll left" className="ml-1"><Chevron d="M7 1.500 3 5l4 3.500" /></button>
        <button type="button" aria-label="Scroll right" className="mr-1 ml-auto"><Chevron d="M3 1.500 7 5 3 8.500" /></button>
      </div>
      <span className="w-4 bg-[#f0f0f0]" />
    </div>
  );
}

function Callout() {
  return (
    <div className="pointer-events-none absolute top-[156px] left-3 z-20 w-[250px]">
      <svg viewBox="0 0 100 36" className="ml-[6px] h-9 w-[100px]" aria-hidden="true">
        <path d="M0 0 43 36h51z" fill="#246fa2" fillOpacity=".7" />
      </svg>
      <p className="flex h-20 items-center bg-[#246fa2]/70 pt-1 pl-[52px] text-[22px] text-white">点击画圆命令。</p>
    </div>
  );
}

function Workspace() {
  return (
    <main className="relative flex min-h-0 flex-1 pt-1">
      <SideBar tools={drawTools} className="self-start" />
      <section className="ml-[5px] flex min-w-0 flex-1 flex-col border-2 border-b border-[#929292]">
        <div className="flex min-h-0 flex-1">
          <div className="relative min-w-0 flex-1 overflow-hidden bg-[#212830]">
            <Drawing />
            <span className="absolute top-[5px] left-[3px] text-xs text-black">[−][俯视][二维线框]</span>
            <ViewCube />
          </div>
          <div className="flex w-[17px] flex-col items-center bg-[#f0f0f0] py-1">
            <button type="button" aria-label="Scroll up"><Chevron d="M1.500 7 5 3l3.500 4" /></button>
            <span className="mt-auto mb-[147px] h-[17px] w-[15px] bg-[#cdcdcd]" />
            <button type="button" aria-label="Scroll down"><Chevron d="M1.500 3 5 7l3.500-4" /></button>
          </div>
        </div>
        <LayoutTabs />
      </section>
      <div className="ml-1 flex w-6 flex-col gap-px overflow-hidden">
        <SideBar tools={modifyTools} className="shrink-0" />
        <SideBar tools={orderTools} className="shrink-0" />
      </div>
      <span className="ml-px w-[3px] bg-[#3f6870]" />
      <Callout />
    </main>
  );
}

function CommandLine() {
  const [command, setCommand] = useState("");

  return (
    <section className="mt-[5px] flex h-[57px] shrink-0 font-['DejaVu_Sans_Mono','Noto_Sans_CJK_SC',monospace] text-xs">
      <div className="flex w-[23px] flex-col items-center justify-between bg-gradient-to-b from-[#868686] to-[#3d3d3d] pt-1 pb-[6px]">
        <span className="flex flex-col gap-px">
          <span className="h-px w-[17px] bg-[repeating-linear-gradient(90deg,#c4c4c4_0_2px,#7c7c7c_2px_3px)]" />
          <span className="h-px w-[17px] bg-[repeating-linear-gradient(90deg,#c4c4c4_0_2px,#7c7c7c_2px_3px)]" />
          <span className="h-px w-[17px] bg-[repeating-linear-gradient(90deg,#c4c4c4_0_2px,#7c7c7c_2px_3px)]" />
        </span>
        <button type="button" aria-label="Close command line"><Icon name="close" className="size-[14px]" /></button>
        <button type="button" aria-label="Customize"><Icon name="wrench" className="size-[14px]" /></button>
      </div>
      <div className="flex min-w-0 flex-1 flex-col">
        <div className="h-[33px] bg-[#c6c6c6] pt-[2px] pl-[3px] leading-[15px] text-[#222]">
          <p>命令:</p>
          <p>命令: _.erase 找到 1 个</p>
        </div>
        <div className="flex flex-1 items-center bg-white pl-[5px]">
          <svg viewBox="0 0 14 14" className="size-[14px]" fill="none" aria-hidden="true">
            <path d="M.5.500h13v13H.5z" fill="#dfe5ee" stroke="#9aa3b2" />
            <path d="m3 4 3 3-3 3M7 10.500h4" stroke="#333" />
          </svg>
          <svg viewBox="0 0 8 8" className="ml-[3px] size-2 fill-[#888]" aria-hidden="true"><path d="M1 3h5L3.500 6z" /></svg>
          <input
            aria-label="Command"
            value={command}
            onChange={(event) => setCommand(event.target.value)}
            placeholder="键入命令"
            className="min-w-0 flex-1 pl-2 text-[13px] italic outline-none placeholder:text-[#999]"
          />
        </div>
      </div>
    </section>
  );
}

function StatusButton({ icon, on, className = "w-[22px]", children }) {
  return (
    <button
      type="button"
      aria-label={icon}
      className={clsx(
        "flex shrink-0 items-center justify-center border-r border-[#666]",
        on ? "bg-gradient-to-b from-[#e8fbff] to-[#8fc6d6]" : "bg-gradient-to-b from-[#c9c9c9] to-[#a2a2a2]",
        className,
      )}
    >
      {icon ? <Icon name={icon} /> : null}
      {children}
    </button>
  );
}

function StatusBar() {
  return (
    <footer className="flex h-[23px] shrink-0 border-t border-[#333] bg-gradient-to-b from-[#777] to-[#929292] text-xs text-black">
      <div className="flex w-[217px] items-center gap-[14px] border-r border-[#555] bg-gradient-to-b from-[#989898] to-[#7d7d7d] pt-px pl-[11px] font-['Liberation_Serif'] text-[13px]">
        <span>965.0880,</span>
        <span className="flex gap-2"><span>1634.1439,</span><span>0.0000</span></span>
      </div>
      <div className="flex">
        {statusToggles.map((toggle) => <StatusButton {...toggle} key={toggle.icon} />)}
      </div>
      <div className="ml-auto flex bg-gradient-to-b from-[#c0c0c0] to-[#989898]">
        <StatusButton className="w-[30px]">模型</StatusButton>
        <StatusButton icon="modelSpace" />
        <StatusButton icon="quickView" />
        <span className="w-[19px] bg-[#8b8b8b]" />
        <StatusButton icon="person" className="w-[54px] pl-1">
          <span className="pl-px">1:1</span>
          <Icon name="drop" className="size-4" />
        </StatusButton>
        <StatusButton icon="personSun" />
        <StatusButton icon="personOff" />
        <span className="w-1 bg-[#8b8b8b]" />
        <StatusButton icon="gear" />
        <StatusButton icon="unlockGray" />
        <StatusButton icon="isolate" />
        <span className="w-[6px]" />
        <StatusButton icon="bulb" className="w-6" />
        <StatusButton icon="drop" className="w-[21px]" />
        <StatusButton icon="cleanScreen" className="w-5" />
        <svg viewBox="0 0 16 22" className="h-[22px] w-4 fill-[#e8e8e8]" aria-hidden="true">
          <path d="M12 7h2v2h-2zM8 11h2v2H8zM12 11h2v2h-2zM4 15h2v2H4zM8 15h2v2H8zM12 15h2v2h-2zM0 19h2v2H0zM4 19h2v2H4zM8 19h2v2H8zM12 19h2v2h-2z" />
        </svg>
      </div>
    </footer>
  );
}

function Watermark() {
  return (
    <aside className="absolute right-[70px] bottom-[17px] z-30 flex h-[116px] w-[235px] items-center bg-[#223056] pl-[14px] text-[#c8cbd2]">
      <svg viewBox="0 0 48 52" className="h-[52px] w-12" fill="none" stroke="currentColor" strokeLinecap="round" aria-hidden="true">
        <path d="M18 37v0a4 4 0 0 1-8 0V9Q10 1 18 3L40 17Q49 24 40 31L19 45Q5 51 2 37V14q0-5 2-7" strokeWidth="4" />
        <path d="m20 19 9 6-9 6z" fill="currentColor" stroke="none" />
        <path d="M32 20v10" strokeWidth="2" strokeLinecap="butt" />
      </svg>
      <div className="ml-4 w-36">
        <p className="flex justify-between text-[32px] leading-9 font-bold">
          {[..."溜溜自学"].map((char, index) => <span key={index}>{char}</span>)}
        </p>
        <p className="font-['DejaVu_Sans'] text-[17px] leading-5">zixue.3D66.COM</p>
      </div>
    </aside>
  );
}

export default function App() {
  return (
    <div className="relative flex h-screen min-w-0 flex-col overflow-hidden border-x border-[#4b7078] bg-[#676767] font-['Noto_Sans','Noto_Sans_CJK_SC',sans-serif]">
      <TitleBar />
      <MenuBar />
      <FileTabs />
      <div className="mt-1 flex shrink-0 flex-col gap-[3px]">
        <StandardToolbar />
        <PropertiesToolbar />
      </div>
      <Workspace />
      <CommandLine />
      <StatusBar />
      <Watermark />
    </div>
  );
}
